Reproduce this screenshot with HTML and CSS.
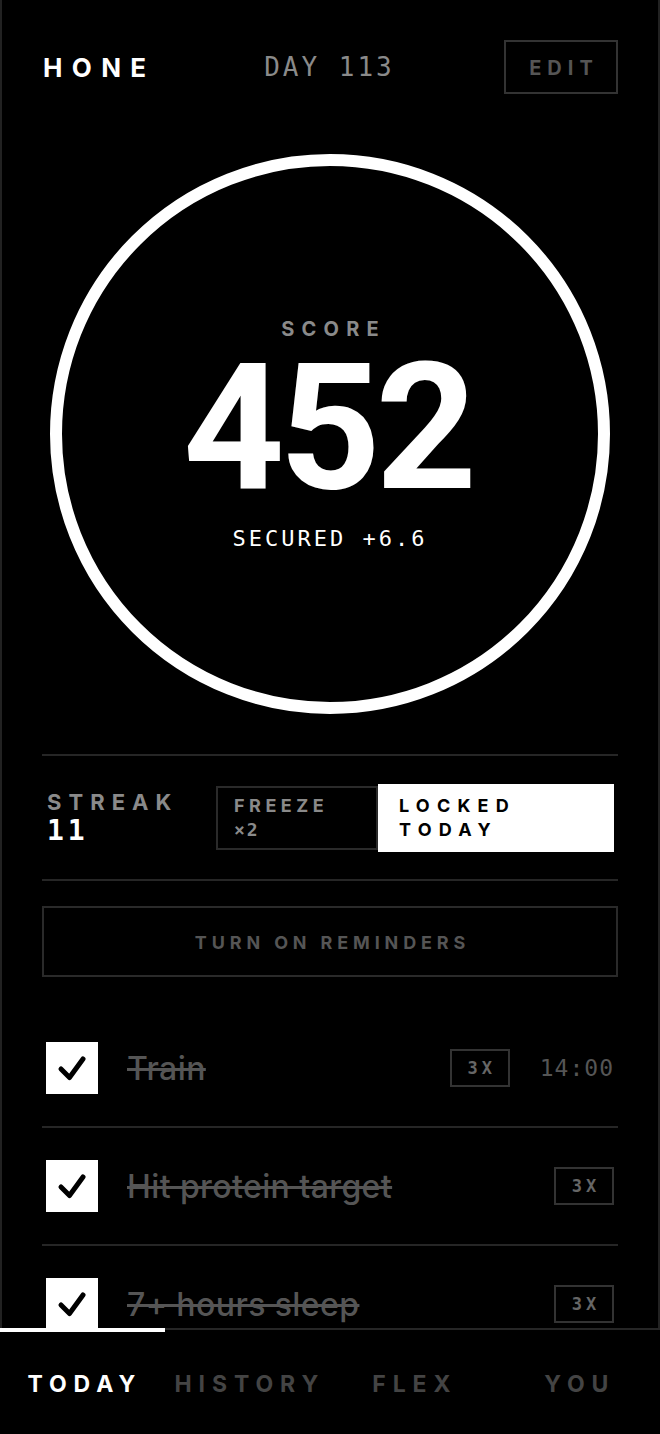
FILE: index.html
```html
<!DOCTYPE html>
<html lang="en">
<head>
    <meta charset="UTF-8">
    <meta name="viewport" content="width=device-width, initial-scale=1.0">
    <title>Hone</title>
    <link rel="stylesheet" href="styles.css">
</head>
<body>
    <div class="app">
        <header class="top">
            <div class="logo">HONE</div>
            <div class="day">DAY 113</div>
            <button class="edit">EDIT</button>
        </header>

        <section class="ring">
            <div class="ring-label">SCORE</div>
            <div class="ring-value">452</div>
            <div class="ring-sub">SECURED +6.6</div>
        </section>

        <section class="streak">
            <div class="streak-info">
                <div class="streak-label">STREAK</div>
                <div class="streak-count">11</div>
            </div>
            <div class="freeze">
                <span class="freeze-title">FREEZE</span>
                <span class="freeze-count">×2</span>
            </div>
            <div class="locked">LOCKED<br>TODAY</div>
        </section>

        <button class="reminders">TURN ON REMINDERS</button>

        <ul class="tasks">
            <li class="task">
                <span class="check">
                    <svg width="52" height="52" viewBox="0 0 52 52"><path d="M15 27 L23.5 35.5 L37 17" fill="none" stroke="#000" stroke-width="5" stroke-linecap="round" stroke-linejoin="round"/></svg>
                </span>
                <span class="task-name">Train</span>
                <span class="badge">3X</span>
                <span class="time">14:00</span>
            </li>
            <li class="task">
                <span class="check">
                    <svg width="52" height="52" viewBox="0 0 52 52"><path d="M15 27 L23.5 35.5 L37 17" fill="none" stroke="#000" stroke-width="5" stroke-linecap="round" stroke-linejoin="round"/></svg>
                </span>
                <span class="task-name">Hit protein target</span>
                <span class="badge">3X</span>
            </li>
            <li class="task">
                <span class="check">
                    <svg width="52" height="52" viewBox="0 0 52 52"><path d="M15 27 L23.5 35.5 L37 17" fill="none" stroke="#000" stroke-width="5" stroke-linecap="round" stroke-linejoin="round"/></svg>
                </span>
                <span class="task-name">7+ hours sleep</span>
                <span class="badge">3X</span>
            </li>
        </ul>
    </div>

    <nav class="tabs">
        <a class="tab active" href="#">TODAY</a>
        <a class="tab" href="#">HISTORY</a>
        <a class="tab" href="#">FLEX</a>
        <a class="tab" href="#">YOU</a>
    </nav>
</body>
</html>
```

FILE: styles.css
```css
* {
    box-sizing: border-box;
}

html,
body {
    height: 100%;
}

body {
    margin: 0;
    background-color: #000;
    color: #fff;
    font-family: Inter, "Noto Sans", sans-serif;
    display: flex;
    flex-direction: column;
}

button {
    font-family: inherit;
    background: none;
    cursor: pointer;
}

.app {
    flex: 1 1 auto;
    min-height: 0;
    overflow: hidden;
    border-left: 2px solid #222;
    border-right: 2px solid #222;
    padding: 40px 40px 0;
}

/* header */
.top {
    display: grid;
    grid-template-columns: 1fr auto 1fr;
    align-items: center;
    height: 54px;
}

.logo {
    padding-left: 1px;
    font-size: 26px;
    font-weight: 700;
    letter-spacing: 0.36em;
}

.day {
    font-family: "DejaVu Sans Mono", monospace;
    font-size: 26px;
    letter-spacing: 3px;
    color: #8a8a8a;
    margin-left: -1px;
}

.edit {
    justify-self: end;
    width: 114px;
    height: 54px;
    border: 2px solid #333;
    color: #555;
    font-size: 20px;
    font-weight: 700;
    letter-spacing: 0.3em;
    padding: 2px 0 0 6px;
}

/* score ring */
.ring {
    width: 560px;
    height: 560px;
    margin: 60px auto 0;
    border: 12px solid #fff;
    border-radius: 50%;
    display: flex;
    flex-direction: column;
    align-items: center;
    justify-content: center;
}

.ring-label {
    font-size: 20px;
    font-weight: 700;
    letter-spacing: 0.36em;
    margin-right: -0.36em;
    color: #8a8a8a;
    line-height: 20px;
}

.ring-value {
    font-family: Roboto, Inter, sans-serif;
    font-size: 177px;
    font-weight: 700;
    letter-spacing: -0.03em;
    margin: 24px 0.03em 0 0;
    line-height: 130px;
}

.ring-sub {
    font-family: "DejaVu Sans Mono", monospace;
    font-size: 22px;
    letter-spacing: 3px;
    margin-top: 35px;
    line-height: 22px;
}

/* streak */
.streak {
    display: flex;
    align-items: center;
    margin-top: 40px;
    padding: 28px 4px 27px;
    border-top: 2px solid #262626;
    border-bottom: 2px solid #262626;
}

.streak-info {
    width: 170px;
    padding-left: 1px;
}

.streak-label {
    font-size: 22px;
    font-weight: 700;
    letter-spacing: 0.32em;
    color: #8a8a8a;
    line-height: 26px;
}

.streak-count {
    font-family: "DejaVu Sans Mono", monospace;
    font-size: 28px;
    font-weight: 700;
    letter-spacing: 4px;
    line-height: 32px;
}

.freeze {
    width: 162px;
    height: 64px;
    border: 2px solid #2a2a2a;
    padding-left: 16px;
    display: flex;
    flex-direction: column;
    justify-content: center;
    color: #8a8a8a;
}

.freeze-title {
    font-size: 18px;
    font-weight: 700;
    letter-spacing: 0.25em;
    line-height: 24px;
}

.freeze-count {
    font-family: "DejaVu Sans Mono", monospace;
    font-size: 18px;
    font-weight: 700;
    letter-spacing: 2px;
    line-height: 24px;
}

.locked {
    flex: 1;
    height: 68px;
    background-color: #fff;
    color: #000;
    padding: 10px 0 0 21px;
    font-size: 18px;
    font-weight: 700;
    letter-spacing: 0.4em;
    line-height: 24px;
}

/* reminders */
.reminders {
    display: block;
    width: 100%;
    height: 71px;
    margin-top: 25px;
    border: 2px solid #2a2a2a;
    color: #555;
    font-size: 18px;
    font-weight: 700;
    letter-spacing: 0.27em;
    padding: 2px 0 0 5px;
}

/* tasks */
.tasks {
    list-style: none;
    margin: 33px 0 0;
    padding: 0;
}

.task {
    display: flex;
    align-items: center;
    padding: 32px 4px;
    border-bottom: 2px solid #262626;
}

.check {
    width: 52px;
    height: 52px;
    background-color: #fff;
    flex: none;
}

.check svg {
    display: block;
}

.task-name {
    flex: 1;
    margin-left: 29px;
    font-size: 32px;
    font-weight: 500;
    letter-spacing: 0.4px;
    color: #555;
    text-decoration: line-through;
    text-decoration-thickness: 3px;
}

.badge {
    width: 60px;
    height: 38px;
    border: 2px solid #333;
    display: flex;
    align-items: center;
    justify-content: center;
    padding-left: 4px;
    font-family: "DejaVu Sans Mono", monospace;
    font-size: 17px;
    font-weight: 700;
    letter-spacing: 4px;
    color: #666;
}

.time {
    margin-left: 30px;
    font-family: "DejaVu Sans Mono", monospace;
    font-size: 23px;
    letter-spacing: 1px;
    color: #555;
}

/* bottom tabs */
.tabs {
    flex: none;
    height: 106px;
    display: flex;
    border-top: 2px solid #262626;
}

.tab {
    position: relative;
    flex: 1;
    display: flex;
    align-items: center;
    justify-content: center;
    padding: 4px 0 0 0.2em;
    font-size: 23px;
    font-weight: 700;
    letter-spacing: 0.3em;
    color: #444;
    text-decoration: none;
}

.tab.active {
    color: #fff;
}

.tab.active::before {
    content: "";
    position: absolute;
    top: -2px;
    left: 0;
    right: 0;
    height: 4px;
    background-color: #fff;
}
```
